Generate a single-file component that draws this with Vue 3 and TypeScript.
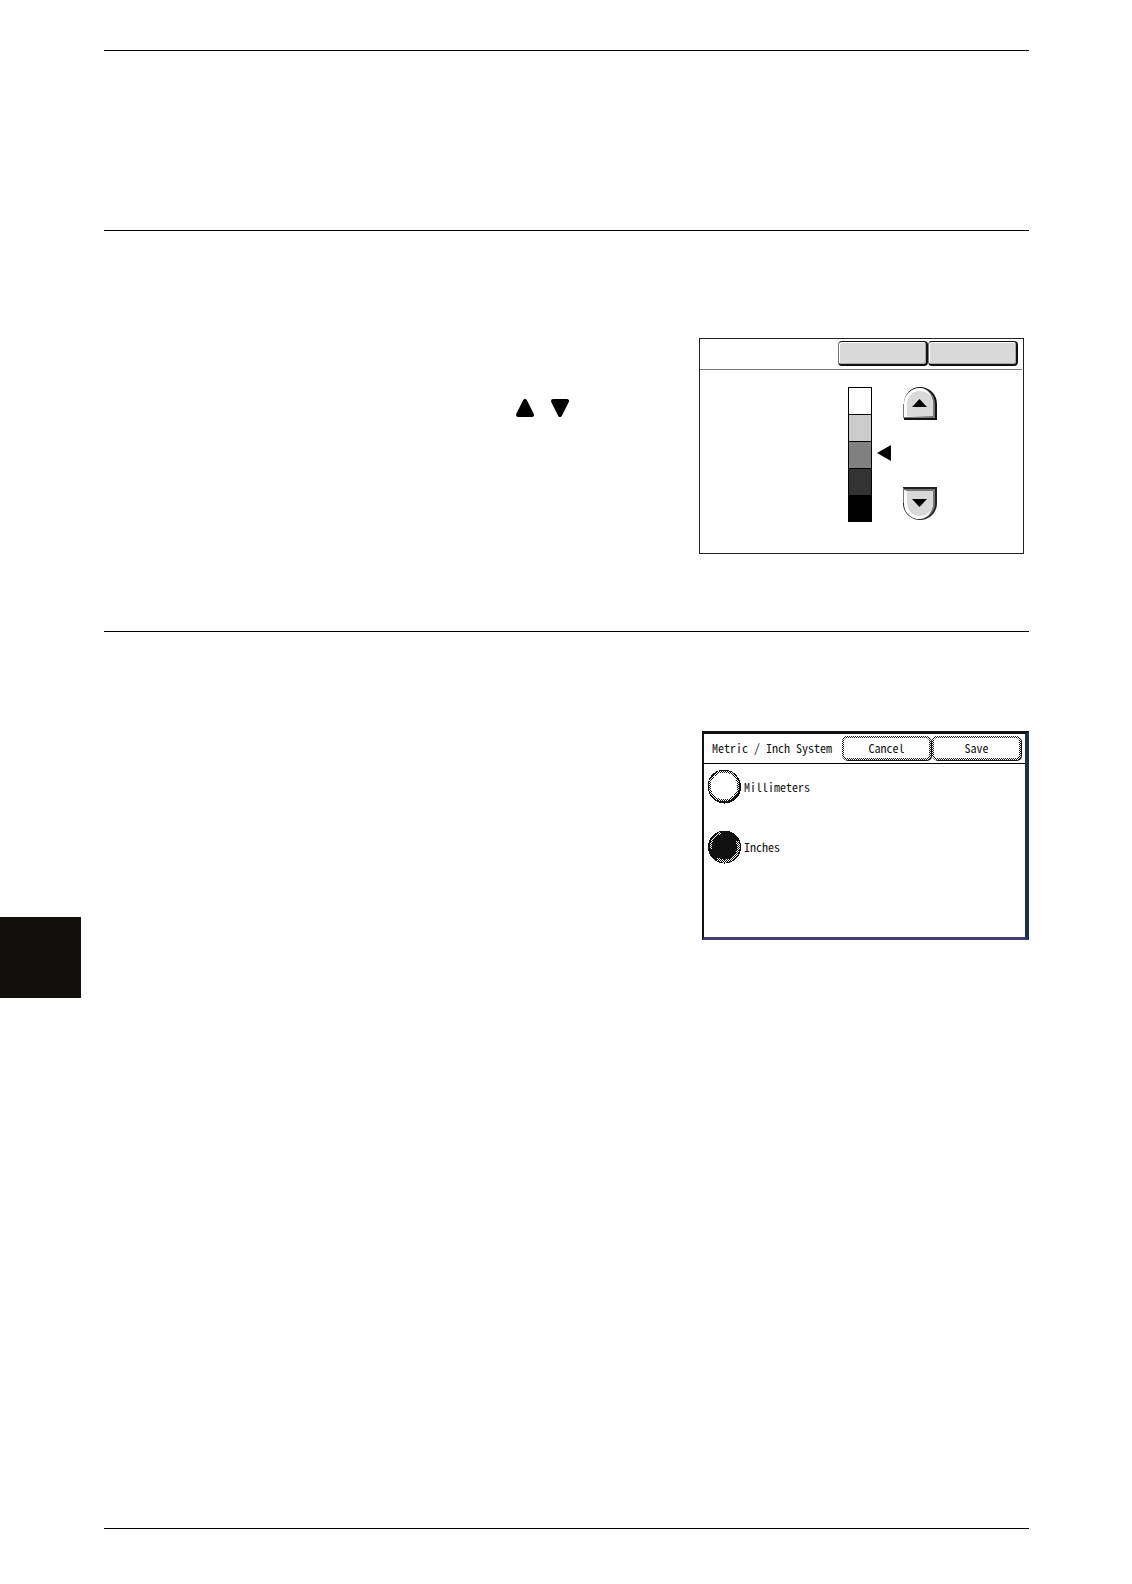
<script setup lang="ts">
import { ref } from 'vue'

type Unit = 'Millimeters' | 'Inches'

const units: Unit[] = ['Millimeters', 'Inches']
const unit = ref<Unit>('Inches')
const shades = ['white', 'light', 'medium', 'dark', 'black']
const level = ref(2)

function step(delta: number) {
  level.value = Math.min(shades.length - 1, Math.max(0, level.value + delta))
}
</script>

<template>
  <div class="page">
    <aside class="margin"><div class="tab"></div></aside>
    <main class="content">
      <header class="head"></header>

      <section class="block brightness">
        <div class="symbols">
          <svg width="18" height="18" viewBox="0 0 18 18" aria-hidden="true">
            <path d="M9 2 L16 16 H2 Z" stroke="#000" stroke-width="4" stroke-linejoin="round" />
          </svg>
          <svg width="18" height="18" viewBox="0 0 18 18" aria-hidden="true">
            <path d="M9 16 L16 2 H2 Z" stroke="#000" stroke-width="4" stroke-linejoin="round" />
          </svg>
        </div>

        <div class="panel grey-panel">
          <div class="grey-bar">
            <button type="button" class="grey-button"></button>
            <button type="button" class="grey-button"></button>
          </div>
          <div class="controls">
            <div class="scale">
              <div v-for="shade in shades" :key="shade" class="cell" :class="shade"></div>
            </div>
            <div class="track">
              <div v-for="(shade, i) in shades" :key="shade" class="slot">
                <svg v-if="i === level" width="14" height="16" viewBox="0 0 14 16"><path d="M0 8 L14 0 V16 Z" /></svg>
              </div>
            </div>
            <div class="keys">
              <button type="button" class="key" @click="step(-1)">
                <svg width="34" height="34" viewBox="0 0 34 34">
                  <path d="M1 33 V17 C1 7 8 0 17 0 C26 0 34 7 34 17 V33 Z" fill="#111" />
                  <path d="M0.500 31 V17" fill="none" stroke="#777" />
                  <path d="M1 31 V17 C1 8 8 1 17 1 C25 1 32 8 32 17 V31 Z" fill="#777" />
                  <path d="M1 30 V17 C1 8 8 1 17 1 C24 1 30 8 30 17 V29 Z" fill="#fff" />
                  <path d="M4 29 V17 C4 9 10 4 17 4 C24 4 30 9 30 17 V29 Z" fill="#d9d9d9" />
                  <path d="M9 20 L16.500 12 L24 20 Z" />
                </svg>
              </button>
              <button type="button" class="key" @click="step(1)">
                <svg width="34" height="34" viewBox="0 0 34 34">
                  <path d="M0 1 H34 V17 C34 27 26 34 17 34 C8 34 0 27 0 17 Z" fill="#222" />
                  <path d="M1 3 H32 V17 C32 26 25 33 17 33 C8 33 1 26 1 17 Z" fill="#777" />
                  <path d="M1 4 L4 5 H30 V17 C30 24 26 30 21 32 C16 34 9 33 5 28 C2 25 1 21 1 17 Z" fill="#fff" />
                  <path d="M4 5 H30 V17 C30 25 24 30 17 30 C10 30 4 25 4 17 Z" fill="#d9d9d9" />
                  <path d="M0.500 2 V17" stroke="#777" />
                  <path d="M9 13 L16.500 21 L24 13 Z" />
                </svg>
              </button>
            </div>
          </div>
        </div>
      </section>

      <section class="block system">
        <form class="panel lcd" @submit.prevent>
          <div class="lcd-bar">
            <span class="title">Metric / Inch System</span>
            <button type="button" class="lcd-button">Cancel</button>
            <button type="submit" class="lcd-button">Save</button>
          </div>
          <div class="options">
            <label v-for="name in units" :key="name" class="option">
              <span class="dial">
                <input v-model="unit" type="radio" name="unit" :value="name" />
                <svg width="34" height="34" viewBox="0 0 34 34" shape-rendering="crispEdges" aria-hidden="true">
                  <defs>
                    <pattern id="dither" width="2" height="2" patternUnits="userSpaceOnUse">
                      <rect width="2" height="2" fill="#fff" />
                      <rect width="1" height="1" fill="#111" />
                      <rect x="1" y="1" width="1" height="1" fill="#111" />
                    </pattern>
                  </defs>
                  <circle cx="16.500" cy="17" r="16.500" fill="#111" />
                  <template v-if="unit === name">
                    <path d="M3 19 A14 14 0 0 1 13 3" fill="none" stroke="url(#dither)" stroke-width="2" />
                    <path d="M29 11 A14 14 0 0 1 9 29" fill="none" stroke="url(#dither)" stroke-width="3" />
                  </template>
                  <template v-else>
                    <circle cx="16" cy="16" r="15.500" fill="url(#dither)" />
                    <circle cx="16" cy="16" r="16" fill="none" stroke="#111" />
                    <circle cx="16" cy="16" r="13.500" fill="#fff" />
                  </template>
                </svg>
              </span>
              <span>{{ name }}</span>
            </label>
          </div>
        </form>
      </section>

      <footer class="foot"></footer>
    </main>
  </div>
</template>

<style>
body {
  margin: 0;
  background: #fff;
}
</style>

<style scoped>
* {
  box-sizing: border-box;
}

.page {
  display: grid;
  grid-template-columns: 104px 1fr 103px;
  min-height: 100vh;
}

.margin {
  padding-top: 917px;
}

.tab {
  width: 81px;
  height: 81px;
  background: #11100d;
}

.content {
  display: flex;
  flex-direction: column;
  padding-top: 50px;
}

.head {
  height: 180px;
  border-top: 1px solid #000;
}

.block {
  display: flex;
  justify-content: flex-end;
  align-items: flex-start;
  border-top: 1px solid #000;
}

.brightness {
  gap: 130px;
  padding: 107px 5px 77px 0;
}

.system {
  flex: 1;
  padding-top: 99px;
}

.foot {
  height: 56px;
  border-top: 1px solid #000;
}

.symbols {
  display: flex;
  gap: 17px;
  padding-top: 61px;
}

svg {
  display: block;
}

button {
  margin: 0;
  padding: 0;
}

.grey-panel {
  width: 325px;
  height: 216px;
  border: 1px solid #222;
}

.grey-bar {
  display: flex;
  justify-content: flex-end;
  height: 31px;
  margin-right: 1px;
  padding: 2px 4px 0 0;
  border-bottom: 1px solid #777;
}

.grey-button {
  width: 90px;
  height: 25px;
  border: 1px solid #111;
  border-left-color: #777;
  border-right-width: 2px;
  border-bottom-width: 2px;
  border-radius: 4px;
  background: #d9d9d9;
  box-shadow: inset 1px 1px 0 #fff, inset -1px -1px 0 #aaa;
}

.controls {
  display: flex;
  padding: 17px 0 0 148px;
}

.scale {
  width: 24px;
  border: 1px solid #000;
}

.cell {
  height: 27px;
  border-bottom: 1px solid #000;
}

.cell:last-child {
  height: 25px;
}

.white {
  background: #fff;
}

.light {
  background: #ccc;
}

.medium {
  background: #808080;
}

.dark {
  background: #333;
}

.black {
  background: #000;
}

.track {
  width: 31px;
  padding-left: 5px;
}

.slot {
  display: flex;
  align-items: center;
  height: 27px;
  padding-bottom: 3px;
}

.keys {
  display: flex;
  flex-direction: column;
  justify-content: space-between;
  height: 133px;
}

.key {
  width: 34px;
  height: 34px;
  border: 0;
  background: none;
}

.lcd {
  width: 327px;
  height: 209px;
  border: solid #111;
  border-width: 3px 4px 3px 2px;
  border-right-color: #1c3050;
  border-bottom-color: #443a78;
  color: #111;
  font: 12px/16px "Noto Sans Mono CJK JP", "Liberation Mono", monospace;
}

.lcd-bar {
  display: flex;
  align-items: center;
  height: 30px;
  padding: 0 4px 2px 8px;
  border-bottom: 1px solid #000;
}

.title {
  flex: 1;
  white-space: nowrap;
}

.lcd-button {
  width: 89px;
  height: 24px;
  margin-left: 1px;
  border: 2px solid transparent;
  border-radius: 5px;
  background:
    linear-gradient(#fff, #fff) padding-box,
    repeating-conic-gradient(#111 0 25%, #fff 0 50%) 0 0 / 2px 2px border-box;
  box-shadow: 1px 1px 0 #111;
  color: inherit;
  font: inherit;
}

.options {
  display: flex;
  flex-direction: column;
  align-items: flex-start;
  gap: 26px;
  padding: 6px 0 0 4px;
}

.option {
  display: flex;
  align-items: center;
  gap: 2px;
}

.dial {
  position: relative;
}

.dial input {
  position: absolute;
  inset: 0;
  width: 100%;
  height: 100%;
  margin: 0;
  opacity: 0;
}
</style>
